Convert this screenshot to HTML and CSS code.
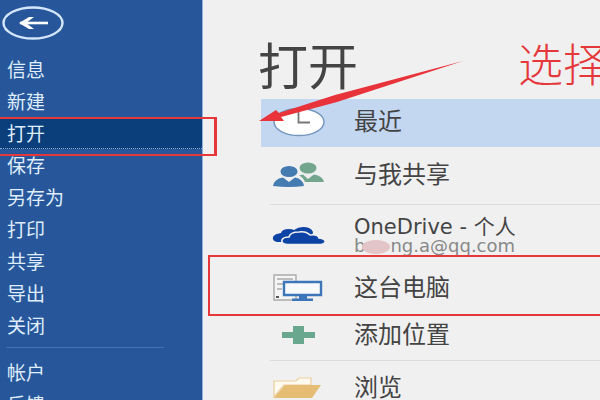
FILE: index.html
```html
<!DOCTYPE html>
<html lang="zh-CN">
<head>
    <meta charset="UTF-8">
    <meta name="viewport" content="width=device-width, initial-scale=1.0">
    <title>打开</title>
    <link rel="stylesheet" href="styles.css">
</head>
<body>
<div class="wrap">
    <aside class="side">
        <button class="back" type="button" aria-label="返回">
            <svg width="64" height="36" viewBox="0 0 64 36">
                <ellipse cx="32" cy="18" rx="29.5" ry="15.5" fill="none" stroke="#d3e6fb" stroke-width="2.4"/>
                <path d="M19 18H47" fill="none" stroke="#fff" stroke-width="2.6"/>
                <path d="M18 18L28 12H33L25 18L33 24H28Z" fill="#fff"/>
            </svg>
        </button>
        <nav class="nav">
            <a href="#">信息</a>
            <a href="#">新建</a>
            <a href="#" class="active">打开<i class="mark"></i></a>
            <a href="#">保存</a>
            <a href="#">另存为</a>
            <a href="#">打印</a>
            <a href="#">共享</a>
            <a href="#">导出</a>
            <a href="#">关闭</a>
            <hr>
            <a href="#">帐户</a>
            <a href="#">反馈</a>
        </nav>
    </aside>
    <main class="main">
        <header class="head">
            <h1>打开</h1>
            <span class="tip">选择</span>
        </header>
        <div class="places">
            <a href="#" class="place recent">
                <svg width="54" height="30" viewBox="0 0 54 30">
                    <ellipse cx="27" cy="15" rx="25" ry="13.5" fill="#fff" stroke="#7396bd" stroke-width="1.4"/>
                    <path d="M26.500 5V15.500H38" fill="none" stroke="#777" stroke-width="1.8"/>
                </svg>
                <span>最近</span>
            </a>
            <a href="#" class="place shared">
                <svg width="54" height="26" viewBox="0 0 54 26">
                    <ellipse cx="36" cy="6" rx="8.500" ry="5.500" fill="#74a68e"/>
                    <path d="M27 13.500L31 12.500L36 17L42 12.500Q51 14 52 20H33Q31 15 27 13.500Z" fill="#74a68e"/>
                    <ellipse cx="17" cy="9.500" rx="8.500" ry="5.500" fill="#447bb0"/>
                    <path d="M1 24Q2 17 11 15.500L17 20L23 15.500Q31 17 32 24Q17 26 1 24Z" fill="#447bb0"/>
                </svg>
                <span>与我共享</span>
            </a>
            <hr>
            <a href="#" class="place drive">
                <svg width="54" height="20" viewBox="0 0 54 20">
                    <path d="M5 16Q0 15 1 11Q2 8 9 7Q10 3 17 3Q20 3 22 4Q26 1 31 1Q39 1 41 6L39 16Z" fill="#0d43a5"/>
                    <path d="M15 18.500Q9 18 10 14Q11 11 17 11Q18 6 27 6Q34 5 38 9Q46 8 47 12Q54 13 53 16Q52 18.500 47 18.500Z" fill="#0d43a5" stroke="#f0f0f0" stroke-width="1.600"/>
                </svg>
                <span class="account">
                    <span>OneDrive - 个人</span>
                    <small>b<i class="blot"></i>ng.a@qq.com</small>
                </span>
            </a>
            <a href="#" class="place pc">
                <svg width="54" height="28" viewBox="0 0 54 28">
                    <path d="M2 1H24V26H2Z" fill="#f5f5f5" stroke="#aaa" stroke-width="1.400"/>
                    <path d="M5 5H21M5 10H12M5 15H10" stroke="#aaa" stroke-width="1.600"/>
                    <path d="M4 22H7V24H4Z" fill="#555"/>
                    <path d="M12 8H49V21H12Z" fill="#f7f9fc" stroke="#3d76b8" stroke-width="2.400"/>
                    <path d="M27 22H35V24.500H41V27H20V24.500H27Z" fill="#3d76b8"/>
                </svg>
                <span>这台电脑</span>
                <i class="mark"></i>
            </a>
            <a href="#" class="place add">
                <svg width="54" height="20" viewBox="0 0 54 20">
                    <path d="M21 1H32V7H43V13H32V19H21V13H10V7H21Z" fill="#69a78e"/>
                </svg>
                <span>添加位置</span>
            </a>
            <hr>
            <a href="#" class="place browse">
                <svg width="54" height="22" viewBox="0 0 54 22">
                    <path d="M2 20V4H24L27 1H39V8H12Z" fill="#fffaf0" stroke="#ebcf9b" stroke-width="1.200"/>
                    <path d="M13 8H49L40 21H2Z" fill="#e6bd74"/>
                </svg>
                <span>浏览</span>
            </a>
        </div>
        <svg class="arrow" width="206" height="64" viewBox="0 0 206 64">
            <path d="M0 61L17 50L20 53L76 35L204 1L78 42L22 57L25 61Z" fill="#e8333a"/>
        </svg>
    </main>
</div>
</body>
</html>
```
FILE: styles.css
```css
* {
    box-sizing: border-box;
}
body {
    margin: 0;
    overflow: hidden;
    background: #f0f0f0;
    font-family: "DejaVu Sans", "Noto Sans CJK SC", sans-serif;
    color: #444;
}
a {
    color: inherit;
    text-decoration: none;
}
hr {
    margin: 0;
    border: 0;
}
svg {
    display: block;
    flex: none;
}
.wrap {
    display: flex;
    height: 100vh;
}
.side {
    flex: none;
    width: 203px;
    padding-top: 5px;
    background: #27579a;
    border-right: 1px solid #8fb1dc;
}
.back {
    display: block;
    margin: 0 0 12px 1px;
    padding: 0;
    border: 0;
    background: none;
}
.nav a {
    position: relative;
    display: flex;
    align-items: center;
    height: 32px;
    padding-left: 7px;
    font-family: "Noto Sans CJK SC", sans-serif;
    font-size: 19px;
    line-height: 24px;
    color: #dfedfc;
}
.nav .active {
    background: #0a3f7b;
    border-bottom: 1px dotted #8fa9c9;
}
.nav hr {
    width: 158px;
    height: 1px;
    margin: 6px 0 8px 6px;
    background: #4272b2;
}
.mark {
    position: absolute;
    border: 2px solid #e5383d;
    z-index: 1;
}
.nav .mark {
    top: 0;
    right: -15px;
    bottom: -8px;
    left: 0;
    border-right-width: 3px;
    border-left: 0;
}
.main {
    position: relative;
    flex: 1;
    min-width: 0;
    padding: 31px 0 0 58px;
}
.head {
    display: flex;
    align-items: flex-start;
    justify-content: space-between;
    height: 68px;
}
.head h1 {
    margin: 0 0 0 -3px;
    font-family: "Noto Sans CJK SC", sans-serif;
    font-size: 50px;
    font-weight: 400;
    line-height: 64px;
}
.tip {
    flex: none;
    margin-right: -8px;
    font-family: "Noto Sans CJK SC", sans-serif;
    font-size: 45px;
    font-weight: 300;
    line-height: 64px;
    color: #e5383d;
}
.place {
    position: relative;
    display: flex;
    align-items: center;
    gap: 28px;
    height: 48px;
    padding-left: 11px;
    font-size: 24px;
    line-height: 24px;
    white-space: nowrap;
}
.recent {
    background: #c3d7f1;
}
.recent,
.shared {
    padding-bottom: 2px;
}
.shared {
    height: 57px;
}
.drive {
    height: 59px;
    padding-top: 3px;
}
.add {
    height: 48px;
    padding-bottom: 2px;
}
.browse {
    height: 54px;
}
.places hr {
    height: 1px;
    margin-left: 9px;
    background: #dcdcdc;
}
.account {
    display: flex;
    flex-direction: column;
    font-size: 21px;
    line-height: 20px;
}
.account small {
    font-size: 18px;
    line-height: 18px;
    color: #888;
}
.blot {
    display: inline-block;
    width: 28px;
    height: 14px;
    margin-left: -3px;
    border-radius: 50%;
    background: #e3c5c7;
    vertical-align: middle;
}
.place .mark {
    top: -9px;
    right: -4px;
    bottom: -4px;
    left: -53px;
}
.arrow {
    position: absolute;
    top: 60px;
    left: 56px;
    z-index: 2;
}
```
